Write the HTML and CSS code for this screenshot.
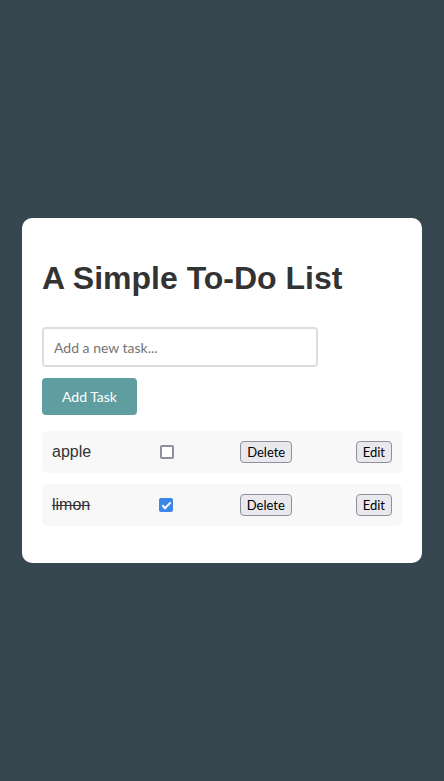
FILE: index.html
```html
<!DOCTYPE html>
<html>
<head>
<meta charset="utf-8">
<link rel="stylesheet" href="styles.css">
</head>
<body>
<div class="card">
  <h1 class="title">A Simple To-Do List</h1>
  <input class="task-input" type="text" placeholder="Add a new task...">
  <button class="add-btn">Add Task</button>
  <ul class="list">
    <li class="item">
      <span class="text">apple</span>
      <input class="check" type="checkbox">
      <button class="small-btn">Delete</button>
      <button class="small-btn">Edit</button>
    </li>
    <li class="item">
      <span class="text done">limon</span>
      <input class="check" type="checkbox" checked>
      <button class="small-btn">Delete</button>
      <button class="small-btn">Edit</button>
    </li>
  </ul>
</div>
</body>
</html>
```
FILE: styles.css
```css
html, body {
  margin: 0;
  padding: 0;
}
body {
  background: #37474f;
  height: 100vh;
  display: flex;
  align-items: center;
  justify-content: center;
  font-family: "Liberation Sans", Arial, sans-serif;
  color: #333;
}
.card {
  width: 400px;
  box-sizing: border-box;
  background: #fff;
  border-radius: 10px;
  padding: 20px;
  display: flex;
  flex-direction: column;
  align-items: flex-start;
}
.title {
  font-size: 32px;
  font-weight: bold;
  margin: 22px 0 30px;
  line-height: 37px;
  color: #333;
}
.task-input {
  width: 276px;
  height: 40px;
  box-sizing: border-box;
  border: 2px solid #ddd;
  border-radius: 4px;
  padding: 0 10px;
  font-family: Lato, "Noto Sans", sans-serif;
  font-size: 14px;
  margin: 0;
  outline: none;
}
.task-input::placeholder {
  color: #757575;
}
.add-btn {
  margin-top: 11px;
  background: #5f9ea0;
  color: #fff;
  border: none;
  border-radius: 4px;
  height: 37px;
  padding: 0 20px;
  font-family: Lato, "Noto Sans", sans-serif;
  font-size: 14px;
}
.list {
  list-style: none;
  padding: 0;
  margin: 16px 0 17px;
  width: 100%;
  display: flex;
  flex-direction: column;
  gap: 11px;
}
.item {
  background: #f8f8f9;
  border-radius: 5px;
  padding: 10px;
  display: flex;
  align-items: center;
  justify-content: space-between;
}
.text {
  font-size: 16px;
  color: #333;
}
.text.done {
  text-decoration: line-through;
}
.check {
  appearance: none;
  -webkit-appearance: none;
  position: relative;
  box-sizing: border-box;
  width: 14px;
  height: 14px;
  margin: 0 3px 0 5px;
  border: 2px solid #8f8f9d;
  border-radius: 2px;
  background: #fff;
}
.check:checked {
  background: #3b86e8;
  border-color: #3b86e8;
}
.check:checked::after {
  content: "";
  position: absolute;
  left: 3px;
  top: 0px;
  width: 3px;
  height: 7px;
  border: solid #fff;
  border-width: 0 2px 2px 0;
  transform: rotate(45deg);
}
.small-btn {
  font-family: Lato, "Noto Sans", sans-serif;
  font-size: 13px;
  height: 22px;
  padding: 0 6px;
  color: #000;
  background: #e9e9ed;
  border: 1px solid #8f8f9d;
  border-radius: 4px;
}
```
